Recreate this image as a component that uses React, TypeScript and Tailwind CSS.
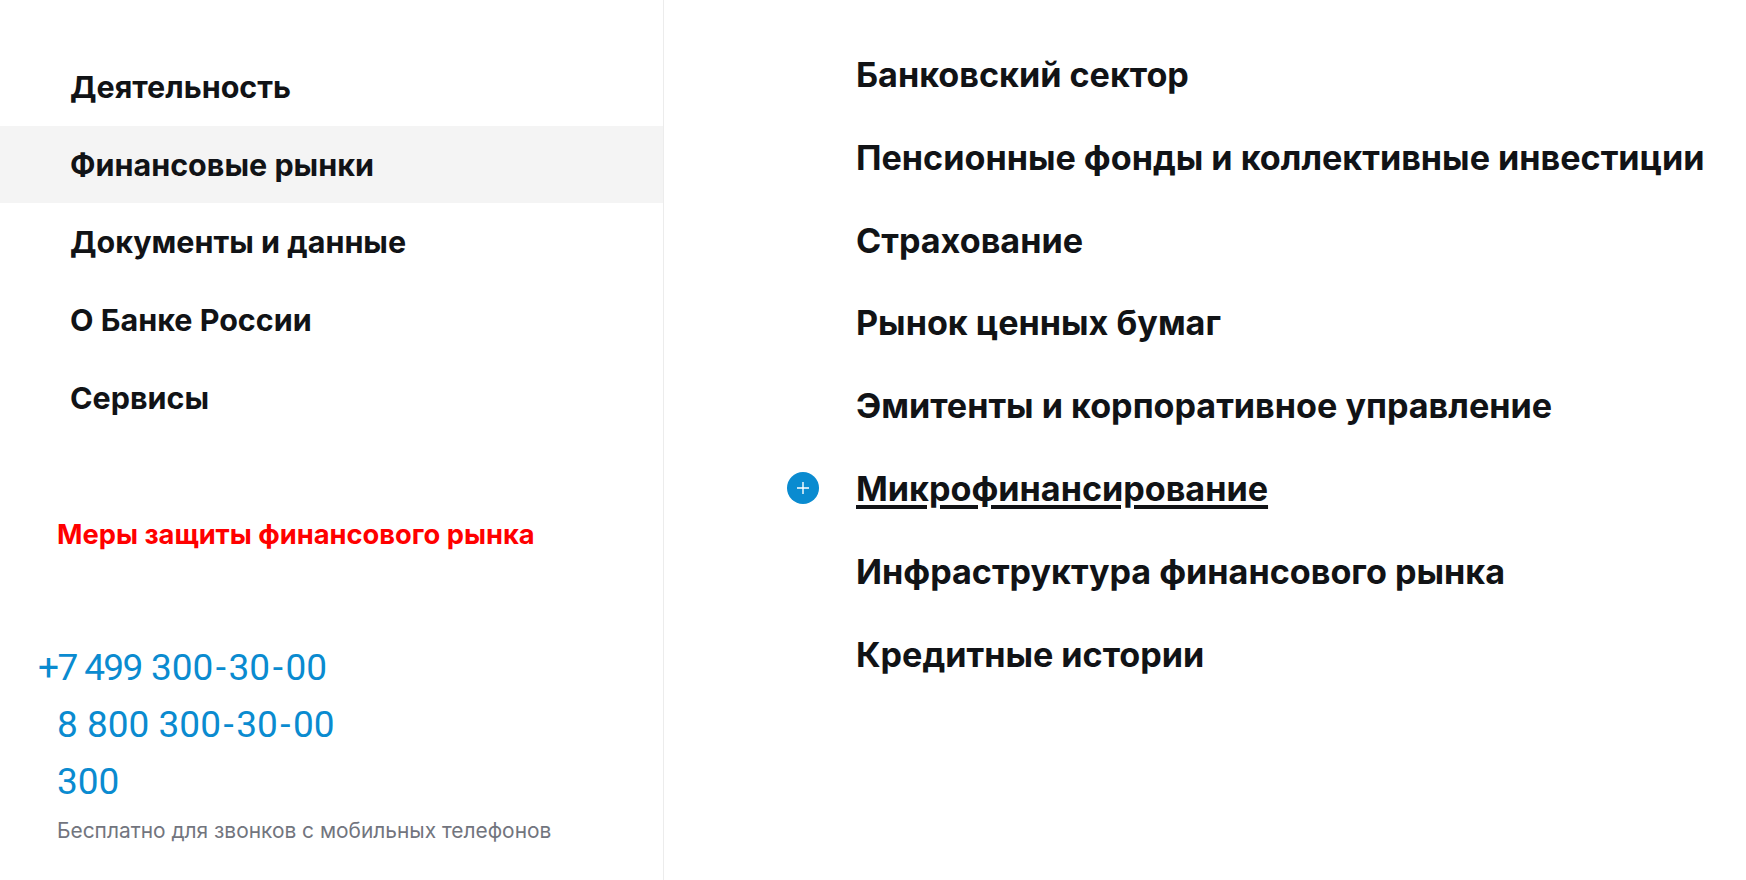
const sections = ['Деятельность', 'Финансовые рынки', 'Документы и данные', 'О Банке России', 'Сервисы']

const topics = [
  'Банковский сектор',
  'Пенсионные фонды и коллективные инвестиции',
  'Страхование',
  'Рынок ценных бумаг',
  'Эмитенты и корпоративное управление',
  'Микрофинансирование',
  'Инфраструктура финансового рынка',
  'Кредитные истории',
]

function PlusBadge() {
  return (
    <span className="absolute left-[-69px] top-[25px] flex h-[32px] w-[32px] items-center justify-center rounded-full bg-[#0a8bd0]">
      <svg width="16" height="16" viewBox="0 0 16 16" fill="none" stroke="#fff" strokeWidth="1.4">
        <path d="M8 2v12M2 8h12" />
      </svg>
    </span>
  )
}

// hyphens in the reference run wider than Roboto's
function Hyphen() {
  return <span className="px-[2.5px]">-</span>
}

function LocalNumber() {
  return (
    <>
      300<Hyphen />30<Hyphen />00
    </>
  )
}

export default function App() {
  return (
    <div className="flex h-[880px] w-[1746px] overflow-hidden bg-white font-['Inter',sans-serif] text-[#111316]">
      <aside className="w-[664px] shrink-0 border-r border-[#ececec] pt-[48px]">
        <nav>
          {sections.map((s) => (
            <div
              key={s}
              className={`flex h-[77.7px] items-center pl-[70px] text-[30.5px] font-[650] ${s === 'Финансовые рынки' ? 'bg-[#f4f4f4] pt-[1px]' : ''}`}
            >
              {s}
            </div>
          ))}
        </nav>
        <div className="mt-[80px] pl-[57px] text-[27.3px] font-[650] leading-[38px] text-[#ff0000]">
          Меры защиты финансового рынка
        </div>
        <div className="mt-[85px] font-['Roboto',sans-serif] text-[37px] leading-[57px] text-[#0a8bd0]">
          <div className="pl-[38px]">
            <span className="tracking-[-1.6px]">+7 499</span> <LocalNumber />
          </div>
          <div className="pl-[57px]">
            8 800 <LocalNumber />
          </div>
          <div className="pl-[57px]">300</div>
        </div>
        <div className="mt-[6px] pl-[57px] text-[20.9px] leading-[30px] text-[#72757e]">
          Бесплатно для звонков с мобильных телефонов
        </div>
      </aside>
      <main className="pl-[192px] pt-[33px]">
        {topics.map((t) => (
          <div key={t} className="relative flex h-[82.88px] items-center text-[34.15px] font-[650] whitespace-nowrap">
            {t === 'Микрофинансирование' ? <PlusBadge /> : null}
            <span className={t === 'Микрофинансирование' ? 'underline decoration-[3.5px] underline-offset-[4px]' : ''}>{t}</span>
          </div>
        ))}
      </main>
    </div>
  )
}
